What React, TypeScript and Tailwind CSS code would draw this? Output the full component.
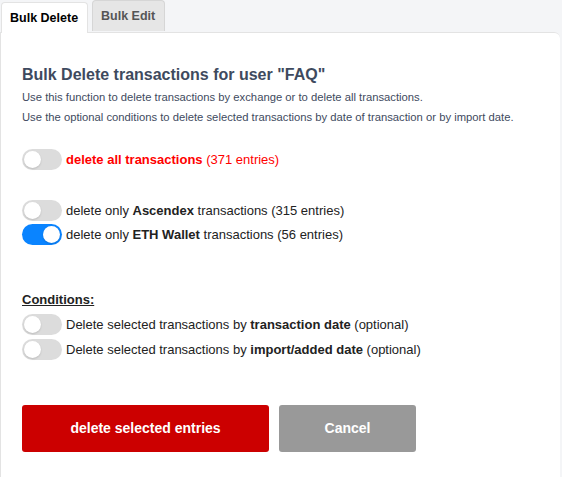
import React from 'react';

interface ToggleProps {
  on?: boolean;
  onChange?: () => void;
}

function Toggle({ on, onChange }: ToggleProps) {
  return (
    <button
      onClick={onChange}
      className={`relative w-[40px] h-[21px] rounded-full shrink-0 transition-colors ${
        on ? 'bg-[#0a84ff]' : 'bg-[#dcdcdc]'
      }`}
    >
      <span
        className={`absolute top-[2px] w-[17px] h-[17px] rounded-full bg-white shadow-[0_1px_2px_rgba(0,0,0,0.15)] transition-all ${
          on ? 'left-[21px]' : 'left-[2px]'
        }`}
      />
    </button>
  );
}

export default function App() {
  const [tab, setTab] = React.useState('delete');
  const [all, setAll] = React.useState(false);
  const [ascendex, setAscendex] = React.useState(false);
  const [eth, setEth] = React.useState(true);
  const [byTx, setByTx] = React.useState(false);
  const [byImport, setByImport] = React.useState(false);

  return (
    <div className="w-[562px] h-[477px] bg-[#f4f5f7] font-['Liberation_Sans',Arial,sans-serif] text-[#222] overflow-hidden">
      <div className="flex items-end h-[32px] pl-[1px] gap-[4px]">
        <button
          onClick={() => setTab('delete')}
          className={`h-[31px] px-[8px] w-[87px] text-left text-[12.5px] font-bold rounded-t-[4px] border border-b-0 ${
            tab === 'delete' ? 'bg-white border-[#e3e3e3] text-black relative top-[1px]' : 'bg-[#e6e6e6] border-[#d6d6d6] text-[#555]'
          }`}
        >
          Bulk Delete
        </button>
        <button
          onClick={() => setTab('edit')}
          className={`h-[31px] px-[8px] w-[73px] text-left text-[12.5px] font-bold rounded-t-[4px] border border-b-0 mb-[1px] ${
            tab === 'edit' ? 'bg-white border-[#e3e3e3] text-black' : 'bg-[#e6e6e6] border-[#d6d6d6] text-[#555]'
          }`}
        >
          Bulk Edit
        </button>
      </div>

      <div className="bg-white border-l border-t border-[#e3e3e3] rounded-tr-[6px] w-[560px] h-[446px] pl-[21px] pt-[32px]">
        <h1 className="text-[16px] font-bold text-[#3e4a5e] leading-[20px]">
          Bulk Delete transactions for user "FAQ"
        </h1>
        <p className="text-[11.25px] text-[#3e4a5e] leading-[20px] mt-[2px]">
          Use this function to delete transactions by exchange or to delete all transactions.
        </p>
        <p className="text-[11.25px] text-[#3e4a5e] leading-[20px]">
          Use the optional conditions to delete selected transactions by date of transaction or by import date.
        </p>

        <div className="flex items-center gap-[4px] mt-[22px] text-[13px] text-[#ff0000]">
          <Toggle on={all} onChange={() => setAll(!all)} />
          <span>
            <b>delete all transactions</b> (371 entries)
          </span>
        </div>

        <div className="flex flex-col gap-[3px] mt-[30px] text-[13px]">
          <div className="flex items-center gap-[4px]">
            <Toggle on={ascendex} onChange={() => setAscendex(!ascendex)} />
            <span>
              delete only <b>Ascendex</b> transactions (315 entries)
            </span>
          </div>
          <div className="flex items-center gap-[4px]">
            <Toggle on={eth} onChange={() => setEth(!eth)} />
            <span>
              delete only <b>ETH Wallet</b> transactions (56 entries)
            </span>
          </div>
        </div>

        <div className="mt-[47px] text-[13px] font-bold underline leading-[16px]">Conditions:</div>
        <div className="flex flex-col gap-[4px] mt-[6px] text-[13px]">
          <div className="flex items-center gap-[4px]">
            <Toggle on={byTx} onChange={() => setByTx(!byTx)} />
            <span>
              Delete selected transactions by <b>transaction date</b> (optional)
            </span>
          </div>
          <div className="flex items-center gap-[4px]">
            <Toggle on={byImport} onChange={() => setByImport(!byImport)} />
            <span>
              Delete selected transactions by <b>import/added date</b> (optional)
            </span>
          </div>
        </div>

        <div className="flex gap-[10px] mt-[45px]">
          <button className="w-[247px] h-[47px] rounded-[3px] bg-[#cc0000] text-white text-[14px] font-bold">
            delete selected entries
          </button>
          <button className="w-[137px] h-[47px] rounded-[3px] bg-[#999999] text-white text-[14px] font-bold">
            Cancel
          </button>
        </div>
      </div>
    </div>
  );
}
